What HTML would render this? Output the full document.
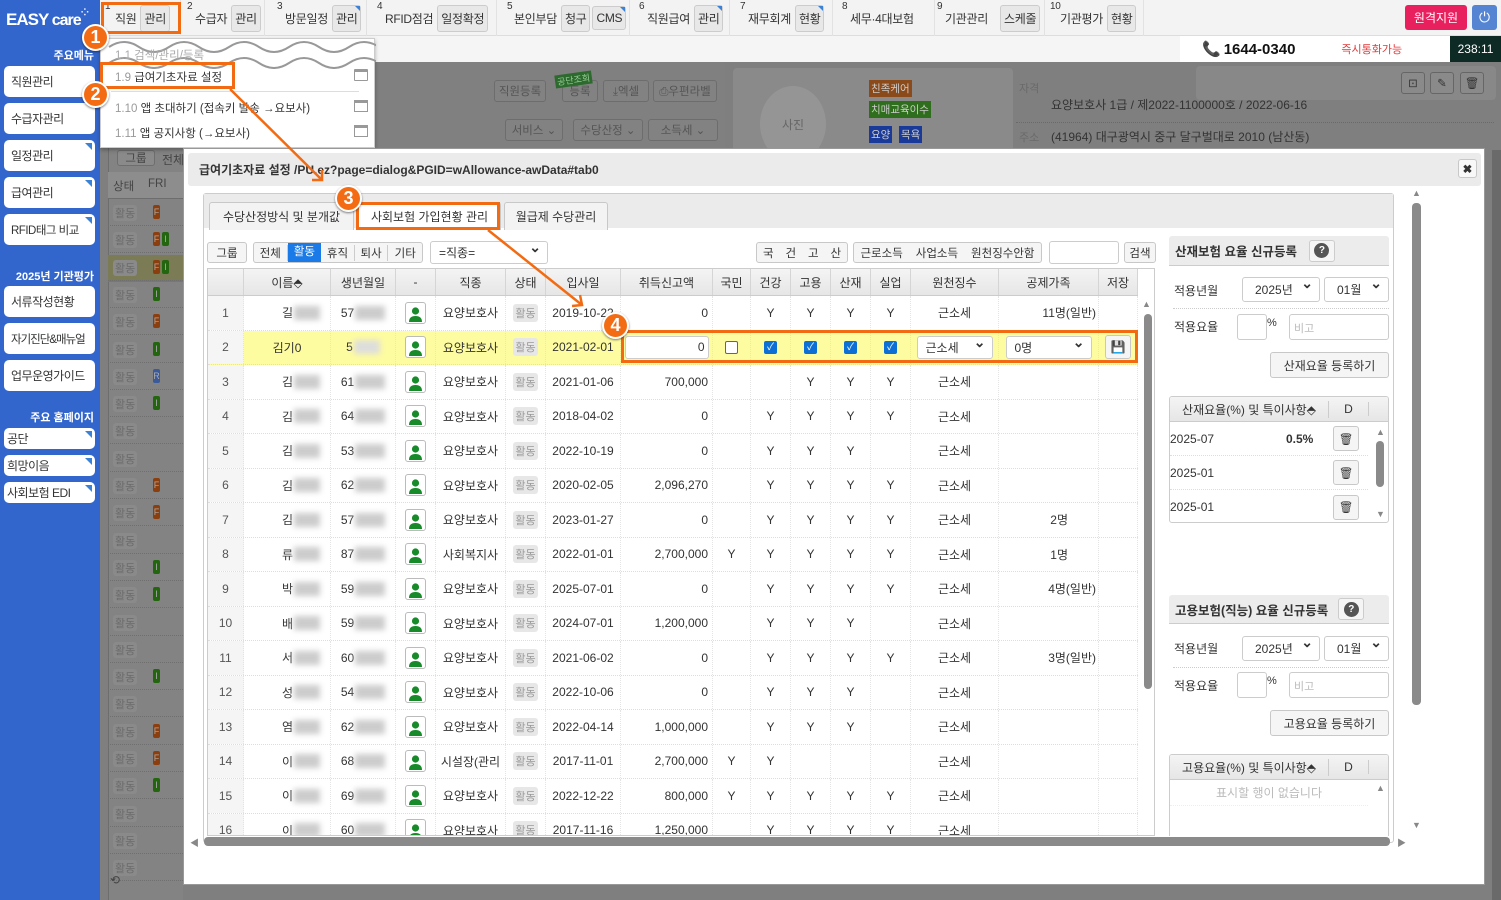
<!DOCTYPE html>
<html><head><meta charset="utf-8">
<style>
*{box-sizing:border-box;margin:0;padding:0}
html,body{width:1501px;height:900px;overflow:hidden}
body{position:relative;background:#7f7f7f;font-family:"Liberation Sans","Noto Sans CJK KR",sans-serif;font-size:12px;color:#333}
.a{position:absolute}
.top{left:100px;top:0;width:1401px;height:36px;background:#f3f3f3;border-bottom:1px solid #ddd}
.mi{position:absolute;top:0;height:36px;display:flex;align-items:center;font-size:12px;color:#333;border-right:1px solid #e2e2e2;padding-right:4px;white-space:nowrap;letter-spacing:-0.3px}
.mi sup{position:absolute;top:1px;left:2px;font-size:10px}
.mb{display:inline-block;border:1px solid #ccc;background:#e8e8e8;border-radius:3px;padding:4px 3px;margin-left:4px;font-size:12px;position:relative;white-space:nowrap}
.sb{left:0;top:0;width:100px;height:900px;background:#3366cc}
.sbt{position:absolute;left:4px;width:91px;background:#fff;border-radius:5px;font-size:12px;color:#333;display:flex;align-items:center;padding-left:7px;white-space:nowrap;letter-spacing:-0.5px}
.tri{position:absolute;right:3px;top:3px;width:0;height:0;border-top:7px solid #3b82d6;border-left:7px solid transparent}
.sh{position:absolute;right:6px;color:#fff;font-size:11px;font-weight:bold;white-space:nowrap}
.dlg{left:183px;top:148px;width:1302px;height:737px;background:#fff;border:1px solid #999}
.row{position:absolute;left:0;width:930px;height:34.5px;border-bottom:1px dotted #ddd;display:grid;grid-template-columns:36px 87px 65px 40px 70px 40px 75px 92px 38px 40px 40px 40px 40px 88px 100px 39px;align-items:center;font-size:12px;color:#333}
.row>div{text-align:center;height:100%;display:flex;align-items:center;justify-content:center;border-right:1px dotted #e4e4e4;white-space:nowrap;overflow:hidden}
.row>div:first-child{background:#f5f5f5;color:#555}
.row>div.r{justify-content:flex-end;padding-right:4px}
.hd{background:linear-gradient(#f4f4f4,#e6e6e6);border-bottom:1px solid #ccc;height:27px}
.hd>div{border-right:1px solid #d5d5d5}
.pb{width:21px;height:22px;border:1px solid #bbb;border-radius:3px;background:#fff;display:flex;align-items:flex-end;justify-content:center}
.st{background:#e7e7e7;color:#999;border-radius:3px;padding:1px 2px;font-size:11px}
.bl{display:inline-block;width:26px;height:14px;background:#ccc;filter:blur(3px);margin-left:1px}
.btn{position:absolute;border:1px solid #c8c8c8;background:#f5f5f5;border-radius:3px;display:flex;align-items:center;justify-content:center;font-size:11.5px;color:#333;white-space:nowrap}
.circ{position:absolute;width:27px;height:27px;border-radius:50%;background:#f36b12;border:2px solid #fff;color:#fff;font-weight:bold;font-size:18px;display:flex;align-items:center;justify-content:center;box-shadow:0 1px 2px rgba(0,0,0,.5)}
.sel{position:absolute;border:1px solid #ccc;border-radius:3px;background:#fff;display:flex;align-items:center;padding-left:8px;font-size:12px;color:#333}
.sel:after{content:"⌄";position:absolute;right:6px;top:-3px;font-size:14px;font-weight:bold}
.cb{width:13px;height:13px;border-radius:2px;background:#0b6fd6;color:#fff;font-size:10px;line-height:13px;text-align:center}
.bgr{position:absolute;left:108px;width:75px;height:27px;border-bottom:1px dotted #6f6f6f;font-size:11px;color:#6a6a6a}
.bgr span.s{position:absolute;left:5px;top:6px;background:#8a8a8a;border-radius:3px;padding:0 2px}
.bd{position:absolute;top:6px;width:7px;height:14px;border-radius:2px;font-size:9px;color:#aaa;text-align:center;line-height:14px}
</style></head><body>

<div class="a" style="left:100px;top:36px;width:1401px;height:26px;background:#f5f5f5"></div>
<div class="a" style="left:1180px;top:36px;width:270px;height:26px;background:#fff;font-size:15px;font-weight:bold;color:#111;display:flex;align-items:center;padding-left:22px;white-space:nowrap"><span style="color:#e91e63;margin-right:3px">📞</span>1644-0340<span style="font-size:11px;color:#e23b3b;font-weight:normal;margin-left:46px">즉시통화가능</span></div>
<div class="a" style="left:1450px;top:36px;width:51px;height:26px;background:#0e2a24;color:#fff;font-size:12px;display:flex;align-items:center;justify-content:center">238:11</div>
<div class="a" style="left:108px;top:148px;width:75px;height:752px;background:#838383;border-left:1px solid #6d6d6d"></div>
<div class="a" style="left:108px;top:172px;width:75px;height:27px;background:#8d8d8d;font-size:11.5px;color:#444;border-bottom:1px solid #6d6d6d"><span style="position:absolute;left:5px;top:6px">상태</span><span style="position:absolute;left:40px;top:6px">FRI</span></div>
<div class="a" style="left:108px;top:150px;width:75px;height:20px;white-space:nowrap"><span class="btn" style="left:9px;top:0;width:38px;height:16px;background:#8a8a8a;border-color:#6e6e6e;color:#444">그룹</span><span style="position:absolute;left:54px;top:1px;color:#444">전체</span></div>
<div class="a" style="left:108px;top:255px;width:75px;height:27px;background:#7b7b55"></div>
<div class="a" style="left:375px;top:62px;width:350px;height:90px;background:#808080"></div>
<div class="btn" style="left:494px;top:80px;width:52px;height:22px;background:#828282;border-color:#6d6d6d;color:#555">직원등록</div>
<div class="btn" style="left:562px;top:80px;width:36px;height:22px;background:#828282;border-color:#6d6d6d;color:#555">등록</div>
<div class="a" style="left:555px;top:73px;background:#2d6a2d;color:#9c9;font-size:9px;padding:0 2px;transform:rotate(-8deg)">공단조회</div>
<div class="btn" style="left:603px;top:80px;width:46px;height:22px;background:#828282;border-color:#6d6d6d;color:#555">⤓엑셀</div>
<div class="btn" style="left:653px;top:80px;width:64px;height:22px;background:#828282;border-color:#6d6d6d;color:#555">⎙우편라벨</div>
<div class="btn" style="left:505px;top:119px;width:58px;height:22px;background:#828282;border-color:#6d6d6d;color:#555">서비스 ⌄</div>
<div class="btn" style="left:573px;top:119px;width:70px;height:22px;background:#828282;border-color:#6d6d6d;color:#555">수당산정 ⌄</div>
<div class="btn" style="left:648px;top:119px;width:70px;height:22px;background:#828282;border-color:#6d6d6d;color:#555">소득세 ⌄</div>
<div class="a" style="left:733px;top:68px;width:280px;height:90px;background:#8a8a8a;border-radius:4px"></div>
<div class="a" style="left:760px;top:86px;width:66px;height:76px;border-radius:50%;background:#959595;color:#666;display:flex;align-items:center;justify-content:center;font-size:12px">사진</div>
<div class="a" style="left:869px;top:80px;background:#8b4a1a;color:#ccc;font-size:10.5px;padding:1px 2px">친족케어</div>
<div class="a" style="left:869px;top:101px;background:#2f6e1c;color:#ccc;font-size:10.5px;padding:1px 2px">치매교육이수</div>
<div class="a" style="left:869px;top:126px;background:#1a3a9a;color:#ccc;font-size:10.5px;padding:1px 2px">요양</div>
<div class="a" style="left:899px;top:126px;background:#1a3a9a;color:#ccc;font-size:10.5px;padding:1px 2px">목욕</div>
<div class="a" style="left:1019px;top:80px;color:#6a6a6a;font-size:11px">자격</div>
<div class="a" style="left:1051px;top:96px;color:#333;font-size:12px;white-space:nowrap">요양보호사 1급 / 제2022-1100000호 / 2022-06-16</div>
<div class="a" style="left:1019px;top:129px;color:#6a6a6a;font-size:11px">주소</div>
<div class="a" style="left:1051px;top:128px;color:#333;font-size:12px;white-space:nowrap">(41964) 대구광역시 중구 달구벌대로 2010 (남산동)</div>
<div class="a" style="left:1016px;top:122px;width:478px;border-top:1px dotted #6a6a6a"></div>
<div class="a" style="left:1196px;top:66px;width:300px;height:34px;background:#888;border-radius:4px"></div>
<div class="btn" style="left:1401px;top:72px;width:24px;height:22px;background:#8a8a8a;border-color:#666;color:#333">⊡</div>
<div class="btn" style="left:1430px;top:72px;width:24px;height:22px;background:#8a8a8a;border-color:#666;color:#333">✎</div>
<div class="btn" style="left:1460px;top:72px;width:24px;height:22px;background:#8a8a8a;border-color:#666;color:#333">🗑</div>
<div class="a" style="left:1492px;top:150px;width:9px;height:750px;background:#6a6a6a"></div>

<div id="bgrows"></div>

<div class="a top">
 <div class="mi" style="left:3px;width:78px"><sup>1</sup><span style="margin-left:12px">직원</span><span class="mb">관리</span></div>
 <div class="mi" style="left:85px;width:80px"><sup>2</sup><span style="margin-left:10px">수급자</span><span class="mb">관리</span></div>
 <div class="mi" style="left:175px;width:92px"><sup>3</sup><span style="margin-left:10px">방문일정</span><span class="mb">관리<i class="tri" style="right:0;top:0;border-top-width:5px;border-left-width:5px"></i></span></div>
 <div class="mi" style="left:275px;width:122px"><sup>4</sup><span style="margin-left:10px">RFID점검</span><span class="mb">일정확정</span></div>
 <div class="mi" style="left:405px;width:125px"><sup>5</sup><span style="margin-left:9px">본인부담</span><span class="mb">청구</span><span class="mb" style="margin-left:2px">CMS<i class="tri" style="right:0;top:0;border-top-width:5px;border-left-width:5px"></i></span></div>
 <div class="mi" style="left:537px;width:93px"><sup>6</sup><span style="margin-left:10px">직원급여</span><span class="mb">관리<i class="tri" style="right:0;top:0;border-top-width:5px;border-left-width:5px"></i></span></div>
 <div class="mi" style="left:638px;width:95px"><sup>7</sup><span style="margin-left:10px">재무회계</span><span class="mb">현황<i class="tri" style="right:0;top:0;border-top-width:5px;border-left-width:5px"></i></span></div>
 <div class="mi" style="left:740px;width:95px"><sup>8</sup><span style="margin-left:10px">세무·4대보험</span></div>
 <div class="mi" style="left:835px;width:110px"><sup>9</sup><span style="margin-left:10px">기관관리</span><span class="mb" style="margin-left:12px">스케줄</span></div>
 <div class="mi" style="left:948px;width:96px"><sup>10</sup><span style="margin-left:12px">기관평가</span><span class="mb">현황</span></div>
</div>
<div class="a" style="left:101px;top:2px;width:80px;height:32px;border:3px solid #f26b12"></div>
<div class="a" style="left:1405px;top:5px;width:62px;height:25px;background:#e8205e;border-radius:3px;color:#fff;font-size:12px;display:flex;align-items:center;justify-content:center">원격지원</div>
<div class="a" style="left:1472px;top:5px;width:25px;height:25px;background:#5585d2;border-radius:3px;color:#fff;font-size:14px;display:flex;align-items:center;justify-content:center">⏻</div>

<div class="a sb">
 <div class="a" style="left:6px;top:10px;color:#fff;font-weight:bold;font-size:17px;letter-spacing:-1px;white-space:nowrap">EASY<span style="font-size:16px"> care</span></div>
 <div class="a" style="left:79px;top:4px;color:#fff;font-size:14px">⁘</div>
 <div class="sh" style="top:47px">주요메뉴</div>
 <div class="sbt" style="top:66px;height:31px">직원관리</div>
 <div class="sbt" style="top:103px;height:31px">수급자관리</div>
 <div class="sbt" style="top:140px;height:31px">일정관리<i class="tri"></i></div>
 <div class="sbt" style="top:177px;height:31px">급여관리<i class="tri"></i></div>
 <div class="sbt" style="top:214px;height:31px;font-size:11.5px">RFID태그 비교<i class="tri"></i></div>
 <div class="sh" style="top:268px">2025년 기관평가</div>
 <div class="sbt" style="top:286px;height:31px">서류작성현황</div>
 <div class="sbt" style="top:323px;height:31px;font-size:11.5px;letter-spacing:-1px">자기진단&amp;매뉴얼</div>
 <div class="sbt" style="top:360px;height:31px">업무운영가이드</div>
 <div class="sh" style="top:409px">주요 홈페이지</div>
 <div class="sbt" style="top:428px;height:21px;padding-left:3px">공단<i class="tri"></i></div>
 <div class="sbt" style="top:455px;height:21px;padding-left:3px">희망이음<i class="tri"></i></div>
 <div class="sbt" style="top:482px;height:21px;padding-left:3px">사회보험 EDI<i class="tri"></i></div>
</div>

<div class="a" style="left:100px;top:38px;width:275px;height:110px;background:#fff;border:1px solid #ccc;box-shadow:0 2px 4px rgba(0,0,0,.3);white-space:nowrap">
 <svg class="a" style="left:0;top:0" width="275" height="30"><path d="M8 8 q15 -10 30 0 t30 0 t30 0 t30 0 t30 0 t30 0 t30 0 t30 0 t30 0" fill="none" stroke="#999" stroke-width="2"/><path d="M8 24 q15 -10 30 0 t30 0 t30 0 t30 0 t30 0 t30 0 t30 0 t30 0 t30 0" fill="none" stroke="#999" stroke-width="2"/></svg>
 <div class="a" style="left:14px;top:8px;color:#aaa;font-size:11.5px">1.1 검색/관리/등록</div>
 <div class="a" style="left:14px;top:30px;font-size:11.5px"><span style="color:#999">1.9</span> 급여기초자료 설정</div>
 <div class="a" style="left:253px;top:30px;width:14px;height:12px;border:1px solid #999;border-top:3px solid #999;border-radius:1px"></div>
 <div class="a" style="left:10px;top:52px;width:248px;border-top:1px solid #ddd"></div>
 <div class="a" style="left:14px;top:61px;font-size:11.5px"><span style="color:#999">1.10</span> 앱 초대하기 (접속키 발송 →요보사)</div>
 <div class="a" style="left:253px;top:61px;width:14px;height:12px;border:1px solid #999;border-top:3px solid #999"></div>
 <div class="a" style="left:14px;top:86px;font-size:11.5px"><span style="color:#999">1.11</span> 앱 공지사항 (→요보사)</div>
 <div class="a" style="left:253px;top:86px;width:14px;height:12px;border:1px solid #999;border-top:3px solid #999"></div>
</div>
<div class="a" style="left:100px;top:62px;width:135px;height:27px;border:3px solid #f26b12"></div>

<div class="a dlg">
 <div class="a" style="left:4px;top:4px;width:1293px;height:33px;background:#ebebeb;border-radius:3px;font-size:12px;font-weight:bold;color:#333;display:flex;align-items:center;padding-left:11px;white-space:nowrap">급여기초자료 설정 /PU.ez?page=dialog&amp;PGID=wAllowance-awData#tab0</div>
 <div class="btn" style="left:1274px;top:10px;width:19px;height:19px;background:#f8f8f8;font-weight:bold">✖</div>
 <div class="a" style="left:19px;top:44px;width:1191px;height:650px;border:1px solid #ccc;border-radius:3px"></div>
 <div class="a" style="left:20px;top:45px;width:1189px;height:34px;background:#ebebeb"></div>
 <div class="btn" style="left:25px;top:53px;width:145px;height:28px;background:#f3f3f3;border-bottom:none;border-radius:3px 3px 0 0;font-size:12px">수당산정방식 및 분개값</div>
 <div class="btn" style="left:174px;top:53px;width:143px;height:28px;background:#fff;border-bottom:none;border-radius:3px 3px 0 0;font-size:12px">사회보험 가입현황 관리</div>
 <div class="btn" style="left:320px;top:53px;width:104px;height:28px;background:#f3f3f3;border-bottom:none;border-radius:3px 3px 0 0;font-size:12px">월급제 수당관리</div>
</div>
<div class="a" style="left:356px;top:202px;width:144px;height:28px;border:3px solid #f26b12"></div>

<div class="btn" style="left:207px;top:242px;width:40px;height:21px">그룹</div>
<div class="btn" style="left:253px;top:242px;width:170px;height:21px;background:#f5f5f5;justify-content:flex-start;overflow:hidden">
 <span style="width:34px;text-align:center;border-right:1px solid #ccc">전체</span><span style="width:34px;text-align:center;background:#1a7ae8;color:#fff;height:21px;line-height:21px">활동</span><span style="width:34px;text-align:center;border-right:1px solid #ccc">휴직</span><span style="width:34px;text-align:center;border-right:1px solid #ccc">퇴사</span><span style="width:34px;text-align:center">기타</span></div>
<div class="sel" style="left:430px;top:241px;width:118px;height:23px">=직종=</div>
<div class="btn" style="left:756px;top:242px;width:92px;height:21px;justify-content:space-around">국<span>건</span><span>고</span><span>산</span></div>
<div class="btn" style="left:853px;top:242px;width:189px;height:21px;justify-content:space-around"><span>근로소득</span><span>사업소득</span><span>원천징수안함</span></div>
<div class="a" style="left:1049px;top:241px;width:70px;height:23px;border:1px solid #ccc;border-radius:3px;background:#fff"></div>
<div class="btn" style="left:1124px;top:242px;width:32px;height:21px">검색</div>

<div class="a" style="left:207px;top:268px;width:948px;height:568px;border:1px solid #ccc;overflow:hidden;background:#fff">
 <div class="row hd" style="top:0"><div style="background:none"></div><div>이름⬘</div><div>생년월일</div><div>-</div><div>직종</div><div>상태</div><div>입사일</div><div>취득신고액</div><div>국민</div><div>건강</div><div>고용</div><div>산재</div><div>실업</div><div>원천징수</div><div>공제가족</div><div>저장</div></div>
 <div id="rows"></div>
 <div class="a" style="left:930px;top:27px;width:17px;height:545px;background:#fff"></div>
 <div class="a" style="left:934px;top:30px;color:#888;font-size:9px">▲</div>
 <div class="a" style="left:936px;top:45px;width:8px;height:375px;background:#8a8a8a;border-radius:4px"></div>
</div>
<div class="a" style="left:621px;top:330px;width:517px;height:33px;border:3px solid #f26b12"></div>

<div class="a" style="left:1169px;top:236px;width:220px;height:30px;background:#ececec;border-bottom:1px solid #ccc;border-radius:3px 3px 0 0;font-weight:bold;font-size:12.5px;display:flex;align-items:center;padding-left:6px;white-space:nowrap">산재보험 요율 신규등록<span style="margin-left:12px;width:26px;height:22px;border:1px solid #ccc;border-radius:3px;background:#f5f5f5;display:flex;align-items:center;justify-content:center"><span style="width:15px;height:15px;border-radius:50%;background:#555;color:#fff;font-size:10px;display:flex;align-items:center;justify-content:center">?</span></span></div>
<div class="a" style="left:1174px;top:282px;font-size:12px">적용년월</div>
<div class="sel" style="left:1242px;top:277px;width:78px;height:25px;padding-left:12px">2025년</div>
<div class="sel" style="left:1324px;top:277px;width:65px;height:25px;padding-left:12px">01월</div>
<div class="a" style="left:1173px;top:308px;width:216px;border-top:1px dotted #ccc"></div>
<div class="a" style="left:1174px;top:318px;font-size:12px">적용요율</div>
<div class="a" style="left:1237px;top:314px;width:30px;height:26px;border:1px solid #ccc;border-radius:3px"></div>
<div class="a" style="left:1267px;top:317px;font-size:11px">%</div>
<div class="a" style="left:1289px;top:314px;width:100px;height:26px;border:1px solid #ccc;border-radius:3px;color:#bbb;font-size:11px;padding:5px 4px">비고</div>
<div class="btn" style="left:1270px;top:352px;width:119px;height:26px;font-size:12px">산재요율 등록하기</div>
<div class="a" style="left:1169px;top:396px;width:220px;height:127px;border:1px solid #ccc;border-radius:3px;overflow:hidden;white-space:nowrap">
 <div style="height:25px;background:linear-gradient(#f4f4f4,#e6e6e6);border-bottom:1px solid #ccc;display:flex;font-size:12px;align-items:center"><span style="width:159px;text-align:center;border-right:1px solid #ccc">산재요율(%) 및 특이사항⬘</span><span style="width:40px;text-align:center;border-right:1px solid #ccc">D</span></div>
 <div style="height:34px;display:flex;align-items:center;font-size:12px;border-bottom:1px dotted #ddd;width:198px"><span style="width:116px">2025-07</span><b style="width:42px">0.5%</b><span class="btn" style="position:static;width:26px;height:25px;margin-left:5px">🗑</span></div>
 <div style="height:34px;display:flex;align-items:center;font-size:12px;border-bottom:1px dotted #ddd;width:198px"><span style="width:158px">2025-01</span><span class="btn" style="position:static;width:26px;height:25px;margin-left:5px">🗑</span></div>
 <div style="height:34px;display:flex;align-items:center;font-size:12px;width:198px"><span style="width:158px">2025-01</span><span class="btn" style="position:static;width:26px;height:25px;margin-left:5px">🗑</span></div>
 <div class="a" style="left:206px;top:30px;color:#888;font-size:9px">▲</div>
 <div class="a" style="left:206px;top:44px;width:8px;height:46px;background:#8a8a8a;border-radius:4px"></div>
 <div class="a" style="left:206px;top:112px;color:#888;font-size:9px">▼</div>
</div>
<div class="a" style="left:1169px;top:595px;width:220px;height:29px;background:#ececec;border-bottom:1px solid #ccc;border-radius:3px 3px 0 0;font-weight:bold;font-size:12.5px;display:flex;align-items:center;padding-left:6px;white-space:nowrap">고용보험(직능) 요율 신규등록<span style="margin-left:10px;width:26px;height:22px;border:1px solid #ccc;border-radius:3px;background:#f5f5f5;display:flex;align-items:center;justify-content:center"><span style="width:15px;height:15px;border-radius:50%;background:#555;color:#fff;font-size:10px;display:flex;align-items:center;justify-content:center">?</span></span></div>
<div class="a" style="left:1174px;top:640px;font-size:12px">적용년월</div>
<div class="sel" style="left:1242px;top:636px;width:78px;height:25px;padding-left:12px">2025년</div>
<div class="sel" style="left:1324px;top:636px;width:65px;height:25px;padding-left:12px">01월</div>
<div class="a" style="left:1173px;top:667px;width:216px;border-top:1px dotted #ccc"></div>
<div class="a" style="left:1174px;top:677px;font-size:12px">적용요율</div>
<div class="a" style="left:1237px;top:672px;width:30px;height:26px;border:1px solid #ccc;border-radius:3px"></div>
<div class="a" style="left:1267px;top:675px;font-size:11px">%</div>
<div class="a" style="left:1289px;top:672px;width:100px;height:26px;border:1px solid #ccc;border-radius:3px;color:#bbb;font-size:11px;padding:5px 4px">비고</div>
<div class="btn" style="left:1270px;top:710px;width:119px;height:26px;font-size:12px">고용요율 등록하기</div>
<div class="a" style="left:1169px;top:754px;width:220px;height:82px;border:1px solid #ccc;border-bottom:none;border-radius:3px 3px 0 0;overflow:hidden;white-space:nowrap">
 <div style="height:25px;background:linear-gradient(#f4f4f4,#e6e6e6);border-bottom:1px solid #ccc;display:flex;font-size:12px;align-items:center"><span style="width:159px;text-align:center;border-right:1px solid #ccc">고용요율(%) 및 특이사항⬘</span><span style="width:40px;text-align:center;border-right:1px solid #ccc">D</span></div>
 <div style="height:26px;display:flex;align-items:center;justify-content:center;font-size:12px;color:#bbb;width:198px;border-bottom:1px dotted #eee">표시할 행이 없습니다</div>
 <div class="a" style="left:206px;top:28px;color:#888;font-size:9px">▲</div>
</div>
<div class="a" style="left:1412px;top:188px;color:#888;font-size:9px">▲</div>
<div class="a" style="left:1412px;top:203px;width:9px;height:502px;background:#8a8a8a;border-radius:4px"></div>
<div class="a" style="left:1412px;top:820px;color:#888;font-size:9px">▼</div>
<div class="a" style="left:190px;top:836px;color:#888;font-size:9px">◀</div>
<div class="a" style="left:204px;top:837px;width:1186px;height:9px;background:#8a8a8a;border-radius:4px"></div>
<div class="a" style="left:1397px;top:836px;color:#888;font-size:9px">▶</div>

<svg class="a" style="left:0;top:0" width="1501" height="900">
 <g stroke="#f26b12" stroke-width="2.5" fill="none">
  <path d="M230 89 L322 180"/><path d="M312 180 L322 180 L322 170"/>
  <path d="M488 230 L582 305"/><path d="M572 306 L582 305 L580 295"/>
 </g>
</svg>
<div class="circ" style="left:82px;top:24px">1</div>
<div class="circ" style="left:82px;top:81px">2</div>
<div class="circ" style="left:335px;top:185px">3</div>
<div class="circ" style="left:602px;top:312px">4</div>

<script>
var data=[
["1","길","57","요양보호사","2019-10-22","0","","Y","Y","Y","Y","근소세","11명(일반)"],
["2","김기0","5","요양보호사","2021-02-01","","","","","","","",""],
["3","김","61","요양보호사","2021-01-06","700,000","","","Y","Y","Y","근소세",""],
["4","김","64","요양보호사","2018-04-02","0","","Y","Y","Y","Y","근소세",""],
["5","김","53","요양보호사","2022-10-19","0","","Y","Y","Y","","근소세",""],
["6","김","62","요양보호사","2020-02-05","2,096,270","","Y","Y","Y","Y","근소세",""],
["7","김","57","요양보호사","2023-01-27","0","","Y","Y","Y","Y","근소세","2명"],
["8","류","87","사회복지사","2022-01-01","2,700,000","Y","Y","Y","Y","Y","근소세","1명"],
["9","박","59","요양보호사","2025-07-01","0","","Y","Y","Y","Y","근소세","4명(일반)"],
["10","배","59","요양보호사","2024-07-01","1,200,000","","Y","Y","Y","","근소세",""],
["11","서","60","요양보호사","2021-06-02","0","","Y","Y","Y","Y","근소세","3명(일반)"],
["12","성","54","요양보호사","2022-10-06","0","","Y","Y","Y","","근소세",""],
["13","염","62","요양보호사","2022-04-14","1,000,000","","Y","Y","Y","","근소세",""],
["14","이","68","시설장(관리","2017-11-01","2,700,000","Y","Y","","","","근소세",""],
["15","이","69","요양보호사","2022-12-22","800,000","Y","Y","Y","Y","Y","근소세",""],
["16","이","60","요양보호사","2017-11-16","1,250,000","","Y","Y","Y","Y","근소세",""]];
var person='<span class="pb"><svg width="15" height="17" viewBox="0 0 15 17"><circle cx="7.5" cy="5" r="3.6" fill="#178a2a"/><path d="M1 16 q0-6 6.5-6 q6.5 0 6.5 6z" fill="#178a2a"/></svg></span>';
var h='';
data.forEach(function(d,i){
 var top=27+i*34.5;
 if(i==1){
  h+='<div class="row" style="top:'+top+'px;background:#fefca0"><div>2</div><div style="background:#fefca0">김기0</div><div>5<span class="bl" style="background:#ddd"></span></div><div>'+person+'</div><div>요양보호사</div><div><span class="st">활동</span></div><div>2021-02-01</div>'
  +'<div><span style="width:84px;height:23px;background:#fff;border:1px solid #ccc;border-radius:3px;text-align:right;padding:3px 3px;display:block">0</span></div>'
  +'<div><span style="width:13px;height:13px;border:1px solid #666;border-radius:2px;background:#fff"></span></div><div><span class="cb">✓</span></div><div><span class="cb">✓</span></div><div><span class="cb">✓</span></div><div><span class="cb">✓</span></div>'
  +'<div><span class="sel" style="position:relative;width:76px;height:23px">근소세</span></div><div><span class="sel" style="position:relative;width:86px;height:23px">0명</span></div><div><span class="btn" style="position:static;width:26px;height:24px;font-size:12px">💾</span></div></div>';
 } else {
  var pr=d[12].indexOf('(')>=0?'2px':'30px';
  h+='<div class="row" style="top:'+top+'px"><div>'+d[0]+'</div><div style="padding-left:28px">'+d[1]+'<span class="bl"></span></div><div>'+d[2]+'<span class="bl" style="width:30px"></span></div><div>'+person+'</div><div>'+d[3]+'</div><div><span class="st">활동</span></div><div>'+d[4]+'</div><div class="r">'+d[5]+'</div><div>'+d[6]+'</div><div>'+d[7]+'</div><div>'+d[8]+'</div><div>'+d[9]+'</div><div>'+d[10]+'</div><div>'+d[11]+'</div><div class="r" style="padding-right:'+pr+'">'+d[12]+'</div><div></div></div>';
 }
});
document.getElementById('rows').innerHTML=h;
var b='',badges=['F','FI','FI','I','F','I','R','I','','','F','F','','I','I','','','I','','F','F','I','',''];
for(var k=0;k<25;k++){var t=199+k*27.3;var bd=badges[k]||'';var s='';
 for(var j=0;j<bd.length;j++){var c=bd[j]=='F'?'#8b3f0f':bd[j]=='I'?'#23660f':'#3b5a9a';s+='<span class="bd" style="left:'+(45+j*9)+'px;background:'+c+'">'+bd[j]+'</span>';}
 b+='<div class="bgr" style="top:'+t+'px"><span class="s">활동</span>'+s+'</div>';}
b+='<div class="a" style="left:110px;top:873px;color:#444;font-size:12px">⟲</div>';
document.getElementById('bgrows').innerHTML=b;
</script>
</body></html>
